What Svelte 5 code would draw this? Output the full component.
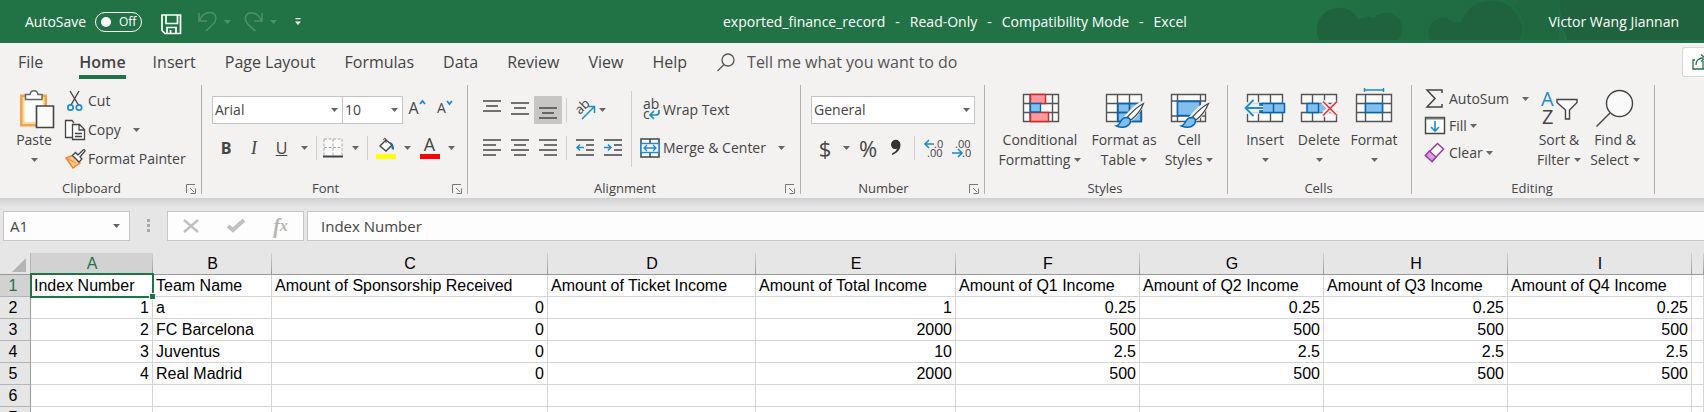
<script>
  const tabs = ['File', 'Home', 'Insert', 'Page Layout', 'Formulas', 'Data', 'Review', 'View', 'Help'];
  const title = ['exported_finance_record', '-', 'Read-Only', '-', 'Compatibility Mode', '-', 'Excel'];
  const columns = ['A', 'B', 'C', 'D', 'E', 'F', 'G', 'H', 'I'];
  const widths = [122, 119, 276, 208, 200, 184, 184, 184, 184];
  const rows = [
    ['Index Number', 'Team Name', 'Amount of Sponsorship Received', 'Amount of Ticket Income', 'Amount of Total Income', 'Amount of Q1 Income', 'Amount of Q2 Income', 'Amount of Q3 Income', 'Amount of Q4 Income'],
    [1, 'a', 0, '', 1, 0.25, 0.25, 0.25, 0.25],
    [2, 'FC Barcelona', 0, '', 2000, 500, 500, 500, 500],
    [3, 'Juventus', 0, '', 10, 2.5, 2.5, 2.5, 2.5],
    [4, 'Real Madrid', 0, '', 2000, 500, 500, 500, 500],
    ['', '', '', '', '', '', '', '', ''],
    ['', '', '', '', '', '', '', '', '']
  ];
</script>

{#snippet caret()}
  <svg class="caret" width="7" height="4" viewBox="0 0 7 4"><path d="M0 0h7L3.5 4z" fill="currentColor" /></svg>
{/snippet}

{#snippet launcher(name)}
  <button class="launcher" aria-label={name}>
    <svg width="10" height="10" viewBox="0 0 10 10" fill="none" stroke="#777"><path d="M.5 9V.5H9M4 4l4 4M9.500 4.500v5h-5" /></svg>
  </button>
{/snippet}

{#snippet lines(list)}
  <svg width="18" height="20" viewBox="0 0 18 20" stroke="#444" stroke-width="1.500">
    {#each list as [y, x1, x2]}<path d="M{x1} {y}H{x2}" />{/each}
  </svg>
{/snippet}

{#snippet brush()}
  <path d="M38.500 17c-6 3-12 9-16 14l3.500 3c5-4 10-10 12.500-17z" fill="#fff" stroke="#f3f2f1" stroke-width="4" />
  <path d="M39.500 17.500c-6 3-12 9-16 13.500l3.500 3c5-4 10-10 12.500-16.500z" fill="#fff" stroke="#444" stroke-width="1.200" />
  <path d="M12.500 40c5-1 3-8.500 10-8.500 4 .5 5 3.500 3 6.500-3 3.500-8 4-13 2z" fill="#83bfec" stroke="#0067b8" stroke-width="1.500" />
{/snippet}

<div class="app">
  <header class="title">
    <svg class="decor" width="400" height="43" viewBox="0 0 400 43" aria-hidden="true">
      <defs>
        <linearGradient id="fade"><stop offset="0" stop-color="#1e633e" stop-opacity="0" /><stop offset=".45" stop-color="#1e633e" stop-opacity=".45" /></linearGradient>
      </defs>
      <rect width="260" height="40" fill="url(#fade)" />
      <g fill="#1e633e">
        <path d="M15 40a22 22 0 1 1 40-20 14 14 0 0 1 15-2 16 16 0 0 1 24 22z" />
        <path d="M126 40c-6-15 8-27 20-20 5 2 6 4 11 2 12-30 50-26 59-2 3 8 2 14 0 20z" />
        <path d="M255 0h145v40H263q-6-20-8-40z" />
      </g>
      <path d="M216 0h39v40h-36q4-20-9-34z" fill="#1e633e" opacity=".4" />
    </svg>
    <div class="quick">
      <span>AutoSave</span>
      <button class="toggle" aria-label="AutoSave off"><i></i>Off</button>
      <button class="save" aria-label="Save">
        <svg width="21" height="21" viewBox="0 0 21 21" fill="none" stroke="#fff" stroke-width="1.700"><path d="M1 1h18.500v18.500H4l-3-3zM5 1v8.500h11.500V1M6 19.500v-6h9v6M9.500 19v-3" /></svg>
      </button>
      <button class="dim undo" aria-label="Undo">
        <svg width="20" height="22" viewBox="0 0 20 22" fill="none" stroke="currentColor" stroke-width="1.500"><path d="M1 2v8h8M1.500 9.500C5 1 15-1 17.500 5c2 5-2 8-9.500 15" /></svg>
        {@render caret()}
      </button>
      <button class="dim redo" aria-label="Redo">
        <svg width="20" height="22" viewBox="0 0 20 22" fill="none" stroke="currentColor" stroke-width="1.500"><path d="M18 2v8h-8M17.500 9.500C14 1 4-1 1.500 6c-1 5 3 8 10 14" /></svg>
        {@render caret()}
      </button>
      <button class="more" aria-label="Customize Quick Access Toolbar">
        <svg width="6" height="8" viewBox="0 0 6 8"><path d="M.5 0h5v1.300h-5zM0 3.500h6L3 7z" fill="#fff" /></svg>
      </button>
    </div>
    <div class="doc">{#each title as part}<span>{part}</span>{/each}</div>
    <div class="user">Victor Wang Jiannan</div>
  </header>

  <nav class="tabs">
    {#each tabs as tab}
      <button class:active={tab === 'Home'}><span>{tab}</span></button>
    {/each}
    <label class="tell">
      <svg width="18" height="20" viewBox="0 0 18 20" fill="none" stroke="#555" stroke-width="1.300"><circle cx="11" cy="7" r="6" /><path d="M7 11.500L.5 18" /></svg>
      <input placeholder="Tell me what you want to do" aria-label="Tell me what you want to do" />
    </label>
    <button class="share" aria-label="Share">
      <svg width="16" height="16" viewBox="0 0 16 16" fill="none" stroke="#217346" stroke-width="1.300"><path d="M3 6H1v9h14v-3M4 11c0-5 3-7 7-7M9 .5L13 4 9 7.500M11 7v8" /></svg>
    </button>
  </nav>

  <div class="ribbon">
    <section>
      <div class="body clip">
        <button class="big">
          <svg width="40" height="44" viewBox="0 0 40 44">
            <path d="M7.500 10h24v29h-24z" fill="#fdfdfd" stroke="#f5a04d" stroke-width="3" /><path d="M9.500 12h20v25h-20z" fill="none" stroke="#fbdc9b" stroke-width="2" />
            <path d="M11.500 13.500v-5h4.500c1-5 7-5 8 0h4v5z" fill="#fff" stroke="#666" stroke-width="1.500" />
            <path d="M22.500 20h17v21.500h-17z" fill="#fafafa" stroke="#444" stroke-width="1.600" />
          </svg>
          <span>Paste</span><span>{@render caret()}</span>
        </button>
        <div class="stack">
          <button>
            <svg width="22" height="22" viewBox="0 0 22 22" fill="none"><path d="M6 1l8.500 14M15 1L7 15" stroke="#444" stroke-width="1.400" /><g stroke="#1e8bcd" stroke-width="1.700"><circle cx="6.500" cy="17.500" r="2.700" /><circle cx="15" cy="17.500" r="2.700" /></g></svg>
            Cut
          </button>
          <button>
            <svg width="22" height="22" viewBox="0 0 22 22" fill="#fdfdfd" stroke="#444" stroke-width="1.300"><path d="M8 18.500H1.500v-17H8l2 2.500" /><path d="M8.500 5.500h7l5 5v10h-12zM15 5.500v5.500h5M11 14.500h7M11 17.500h7" /></svg>
            Copy <b class="gap">{@render caret()}</b>
          </button>
          <button>
            <svg width="22" height="22" viewBox="0 0 22 22"><path d="M2 10l8-3 6 8-7 5z" fill="#fbc98e" stroke="#ed8733" stroke-width="1.500" /><path d="M4 11l8 4" stroke="#ed8733" /><path d="M8.500 7.500l3-3L14 7l5-5q2-1 2 1l-5 6 2 2-3 3z" fill="#fff" stroke="#444" stroke-width="1.300" /></svg>
            Format Painter
          </button>
        </div>
      </div>
      <footer><span>Clipboard</span>{@render launcher('Clipboard settings')}</footer>
    </section>

    <section>
      <div class="body rows">
        <div class="line">
          <label class="combo family"><select aria-label="Font"><option>Arial</option></select>{@render caret()}</label>
          <label class="combo size"><select aria-label="Font size"><option>10</option></select>{@render caret()}</label>
          <button class="grow" aria-label="Increase font size"><span>A</span><svg width="7" height="5" viewBox="0 0 7 5" fill="none" stroke="#1e8bcd" stroke-width="1.800"><path d="M1 4l2.500-3L6 4" /></svg></button>
          <button class="grow small" aria-label="Decrease font size"><span>A</span><svg width="7" height="5" viewBox="0 0 7 5" fill="none" stroke="#1e8bcd" stroke-width="1.800"><path d="M1 1l2.500 3L6 1" /></svg></button>
        </div>
        <div class="line fontline">
          <button class="glyph"><b>B</b></button>
          <button class="glyph"><em>I</em></button>
          <button class="glyph"><u>U</u></button>
          <button aria-label="Underline options">{@render caret()}</button>
          <i class="rule"></i>
          <button aria-label="Borders"><svg width="20" height="20" viewBox="0 0 20 20" fill="none"><path d="M1 1h18v17H1z" fill="#fafafa" /><path d="M1 1h18M1 9.500h18M1 1v17M10 1v17M19 1v17" stroke="#aaa" stroke-dasharray="3 1.500" /><path d="M0 18.500h20" stroke="#444" stroke-width="2" /></svg></button>
          <button aria-label="Border options">{@render caret()}</button>
          <i class="rule"></i>
          <button aria-label="Fill color"><svg width="20" height="22" viewBox="0 0 20 22"><path d="M4 9l6-6 6 5-6 6z" fill="#fff" stroke="#444" stroke-width="1.400" /><path d="M10 6V2Q8 0 7.500 3" fill="none" stroke="#444" /><path d="M13 5q5 0 5 8-4-1-2-5z" fill="#1c6fb4" /><path d="M0 17h20v5H0z" fill="#ff0" /></svg></button>
          <button aria-label="Fill color options">{@render caret()}</button>
          <button class="ink" aria-label="Font color"><span>A</span></button>
          <button aria-label="Font color options">{@render caret()}</button>
        </div>
      </div>
      <footer><span>Font</span>{@render launcher('Font settings')}</footer>
    </section>

    <section>
      <div class="body align">
        <div class="rows">
          <div class="line alignline">
            <button aria-label="Top align">{@render lines([[1, 0, 18], [6, 3, 15], [11, 0, 18]])}</button>
            <button aria-label="Middle align">{@render lines([[3, 0, 18], [8, 3, 15], [14, 0, 18]])}</button>
            <button class="on" aria-label="Bottom align">{@render lines([[8, 0, 18], [13, 3, 15], [18, 0, 18]])}</button>
            <i class="rule"></i>
            <button aria-label="Orientation"><svg width="22" height="22" viewBox="0 0 22 22"><text x="0" y="0" transform="translate(6 16) rotate(-45)" font-size="13" fill="#444">ab</text><path d="M8 20L20 8M13.500 7.500H20.500V14" fill="none" stroke="#1e8bcd" stroke-width="1.500" /></svg></button>
            <button class="left" aria-label="Orientation options">{@render caret()}</button>
          </div>
          <div class="line alignline">
            <button aria-label="Align left">{@render lines([[2, 0, 18], [7, 0, 13], [12, 0, 18], [17, 0, 13]])}</button>
            <button aria-label="Center">{@render lines([[2, 0, 18], [7, 3, 15], [12, 0, 18], [17, 3, 15]])}</button>
            <button aria-label="Align right">{@render lines([[2, 0, 18], [7, 5, 18], [12, 0, 18], [17, 5, 18]])}</button>
            <i class="rule"></i>
            <button aria-label="Decrease indent"><svg width="18" height="20" viewBox="0 0 18 20" fill="none" stroke="#444" stroke-width="1.500"><path d="M0 2h18M10 7h8M10 12h8M0 17h18" /><path d="M8 9.500H1M4 6.500l-3 3 3 3" stroke="#1e8bcd" /></svg></button>
            <button aria-label="Increase indent"><svg width="18" height="20" viewBox="0 0 18 20" fill="none" stroke="#444" stroke-width="1.500"><path d="M0 2h18M10 7h8M10 12h8M0 17h18" /><path d="M0 9.500h7M4 6.500l3 3-3 3" stroke="#1e8bcd" /></svg></button>
          </div>
        </div>
        <i class="tall"></i>
        <div class="rows wide">
          <button class="line">
            <svg width="22" height="24" viewBox="0 0 22 24"><text x="4" y="11" font-size="14" fill="#444">ab</text><text x="4" y="21" font-size="14" fill="#444">c</text><path d="M20 12v2q0 3-3 3h-5M15 13l-4 4 4 4" fill="none" stroke="#1e8bcd" stroke-width="1.700" /></svg>
            Wrap Text
          </button>
          <button class="line">
            <svg width="22" height="22" viewBox="0 0 22 22" fill="none"><path d="M2 2h18v18H2zM11 2v5M11 15v5" fill="#fff" stroke="#444" stroke-width="1.500" /><path d="M2 6.500h18v9H2z" fill="#fff" stroke="#1e8bcd" stroke-width="1.500" /><path d="M5 11h12M8 8l-3 3 3 3M14 8l3 3-3 3" stroke="#1e8bcd" stroke-width="1.400" /></svg>
            Merge &amp; Center <b class="gap">{@render caret()}</b>
          </button>
        </div>
      </div>
      <footer><span>Alignment</span>{@render launcher('Alignment settings')}</footer>
    </section>

    <section>
      <div class="body rows">
        <div class="line"><label class="combo format"><select aria-label="Number format"><option>General</option></select>{@render caret()}</label></div>
        <div class="line numline">
          <button class="sign">$</button>
          <button aria-label="Currency options">{@render caret()}</button>
          <button class="sign">%</button>
          <button aria-label="Comma style"><svg width="12" height="18" viewBox="0 0 12 18"><path d="M1 5.500a4.500 4.500 0 0 1 9.500 0C10.500 11 7 14 2 16v-1.500c3-1.500 4.500-3 5-5C4 11 1 9 1 5.500z" fill="#333" /></svg></button>
          <i class="rule"></i>
          <button aria-label="Increase decimal"><svg width="22" height="22" viewBox="0 0 22 22"><text x="12" y="11" font-size="11" fill="#444">.0</text><text x="5" y="20" font-size="11" fill="#444">.00</text><path d="M12 7H3M7 3L3 7l4 4" fill="none" stroke="#1e8bcd" stroke-width="1.600" /></svg></button>
          <button aria-label="Decrease decimal"><svg width="22" height="22" viewBox="0 0 22 22"><text x="5" y="11" font-size="11" fill="#444">.00</text><text x="12" y="20" font-size="11" fill="#444">.0</text><path d="M2 16h10M8 12l4 4-4 4" fill="none" stroke="#1e8bcd" stroke-width="1.600" /></svg></button>
        </div>
      </div>
      <footer><span>Number</span>{@render launcher('Number settings')}</footer>
    </section>

    <section>
      <div class="body styles">
        <button class="big">
          <svg width="40" height="44" viewBox="0 0 40 44"><path d="M3.500 8.500h35v27h-35zM3.500 17.500h35M3.500 26.500h35M10 8.500v27M32.500 8.500v27" fill="#fafafa" stroke="#555" stroke-width="1.400" /><path d="M10.500 8.500h15v9h-15zM10.500 26.500h18v9h-18z" fill="#ff9a9a" stroke="#d8262c" stroke-width="1.500" /><path d="M10.500 17.500h10v8.500h-10z" fill="#83bfec" stroke="#0067b8" stroke-width="1.300" /></svg>
          <span>Conditional</span><span>Formatting {@render caret()}</span>
        </button>
        <button class="big">
          <svg width="40" height="44" viewBox="0 0 40 44"><path d="M2.500 8.500h35v27h-35z" fill="#fafafa" /><path d="M14 18h23v17H14z" fill="#83bfec" /><path d="M2.500 8.500h35v27h-35zM2.500 17.500h35M2.500 26.500h35M13.500 8.500v27M25.500 8.500v27" fill="none" stroke="#555" stroke-width="1.400" /><path d="M14 35.500v-18h23v18zM14 26.500h23M25.500 17.500v18" fill="none" stroke="#0067b8" stroke-width="1.400" />{@render brush()}</svg>
          <span>Format as</span><span>Table {@render caret()}</span>
        </button>
        <button class="big">
          <svg width="40" height="44" viewBox="0 0 40 44"><path d="M2.500 8.500h34v27h-34zM2.500 15h34M2.500 30h34M8.500 8.500v27M31.500 8.500v27" fill="#fafafa" stroke="#555" stroke-width="1.400" /><path d="M8.500 15.500h22.500v14H8.500z" fill="#83bfec" stroke="#0067b8" stroke-width="1.500" />{@render brush()}</svg>
          <span>Cell</span><span>Styles {@render caret()}</span>
        </button>
      </div>
      <footer><span>Styles</span></footer>
    </section>

    <section>
      <div class="body cells">
        <button class="big">
          <svg width="40" height="44" viewBox="0 0 40 44"><path d="M2.500 8.500h35v27h-35zM2.500 17.500h35M2.500 26.500h35M13.500 8.500v9M25.500 8.500v9M13.500 26.500v9M25.500 26.500v9" fill="#fafafa" stroke="#555" stroke-width="1.400" /><path d="M0 16h17v12H0z" fill="#f3f2f1" opacity=".8" /><path d="M15 17.500h24.500v9H15zM28.500 17.500v9M17 17.500v9" fill="#83bfec" stroke="#0067b8" stroke-width="1.500" /><path d="M18 22H1.500M8.500 14l-8 8 8 8" fill="none" stroke="#f3f2f1" stroke-width="4" /><path d="M18 22H1.500M8.500 14l-8 8 8 8" fill="none" stroke="#1e8bcd" stroke-width="1.800" /></svg>
          <span>Insert</span><span>{@render caret()}</span>
        </button>
        <button class="big">
          <svg width="40" height="44" viewBox="0 0 40 44"><path d="M2.500 8.500h35v9h-35zM2.500 26.500h35v9h-35zM13.500 8.500v9M25.500 8.500v9M13.500 26.500v9M25.500 26.500v9" fill="#fafafa" stroke="#555" stroke-width="1.400" /><path d="M8 17.500h14l6 4.500-6 4.500H8z" fill="#83bfec" /><path d="M20 17.500H8v9h12M19.500 17.500v9" fill="none" stroke="#0067b8" stroke-width="1.500" /><path d="M24 15.500l14 14M38 15.500l-14 14" stroke="#f3f2f1" stroke-width="5" /><path d="M24 15.500l14 14M38 15.500l-14 14" stroke="#e8373d" stroke-width="1.700" /></svg>
          <span>Delete</span><span>{@render caret()}</span>
        </button>
        <button class="big">
          <svg width="40" height="44" viewBox="0 0 40 44"><path d="M2.500 8.500h35v27h-35zM2.500 17.500h35M2.500 26.500h35M11.500 8.500v27M28.500 8.500v27" fill="#fafafa" stroke="#555" stroke-width="1.400" /><path d="M11.500 17.500h17v9h-17z" fill="#83bfec" stroke="#0067b8" stroke-width="1.500" /><path d="M10.500 4h19M10.500 2v4M29.500 2v4" fill="none" stroke="#1e8bcd" stroke-width="1.500" /></svg>
          <span>Format</span><span>{@render caret()}</span>
        </button>
      </div>
      <footer><span>Cells</span></footer>
    </section>

    <section>
      <div class="body edit">
        <div class="stack">
          <button><svg width="22" height="22" viewBox="0 0 22 22" fill="none" stroke="#444" stroke-width="1.500"><path d="M18 5V2H3l8 8.500L3 19h15v-3" /></svg>AutoSum <b class="gap">{@render caret()}</b></button>
          <button><svg width="22" height="22" viewBox="0 0 22 22" fill="none"><path d="M1.500 2.500h19v16h-19z" fill="#fff" stroke="#444" stroke-width="1.400" /><path d="M2 2.500h18v2H2z" fill="#777" /><path d="M11 6v10M7 12l4 4 4-4" stroke="#1e8bcd" stroke-width="1.600" /></svg>Fill {@render caret()}</button>
          <button><svg width="22" height="22" viewBox="0 0 22 22"><path d="M13.500 1.500l6 5.500L8 19.500 1.500 13.500z" fill="#fff" stroke="#9b3ba5" stroke-width="1.500" /><path d="M1.500 13.500l4-4.500 6.500 6-4 4.500z" fill="#d9a0e0" stroke="#9b3ba5" stroke-width="1.300" /></svg>Clear {@render caret()}</button>
        </div>
        <button class="big">
          <svg width="40" height="44" viewBox="0 0 40 44"><text x="2" y="20" font-size="20" fill="#1e8bcd">A</text><text x="3" y="38" font-size="20" fill="#444">Z</text><path d="M18 13.500h20v3L30.500 24v9h-4v-9L18 16.500z" fill="#fafafa" stroke="#444" stroke-width="1.400" /></svg>
          <span>Sort &amp;</span><span>Filter {@render caret()}</span>
        </button>
        <button class="big">
          <svg width="40" height="44" viewBox="0 0 40 44"><circle cx="24.500" cy="17.500" r="13" fill="#fafafa" stroke="#444" stroke-width="1.400" /><path d="M15 27L1.500 40.500" stroke="#444" stroke-width="1.500" /></svg>
          <span>Find &amp;</span><span>Select {@render caret()}</span>
        </button>
      </div>
      <footer><span>Editing</span></footer>
    </section>
  </div>

  <div class="formula">
    <label class="name"><input value="A1" aria-label="Name box" />{@render caret()}</label>
    <i class="dots"></i>
    <div class="fx">
      <button aria-label="Cancel"><svg width="16" height="14" viewBox="0 0 16 14" stroke="#c0c0c0" stroke-width="2.400"><path d="M1 1l14 12M15 1L1 13" /></svg></button>
      <button aria-label="Enter"><svg width="18" height="14" viewBox="0 0 18 14" fill="none" stroke="#c0c0c0" stroke-width="4"><path d="M1 7l5 4L17 1" /></svg></button>
      <button class="fn" aria-label="Insert function">f<sub>x</sub></button>
    </div>
    <input class="value" value="Index Number" aria-label="Formula bar" />
  </div>

  <table>
    <colgroup>
      <col style="width:31px" />
      {#each widths as w}<col style="width:{w}px" />{/each}
      <col />
    </colgroup>
    <thead>
      <tr>
        <th class="corner"><svg width="14" height="14" viewBox="0 0 14 14"><path d="M14 0v14H0z" fill="#b4b4b4" /></svg></th>
        {#each columns as c}<th class:sel={c === 'A'}>{c}</th>{/each}
        <th></th>
      </tr>
    </thead>
    <tbody>
      {#each rows as row, r}
        <tr>
          <th class:sel={r === 0}>{r + 1}</th>
          {#each row as cell, c}
            <td class:num={typeof cell === 'number'} class:cursor={r === 0 && c === 0}>{cell}</td>
          {/each}
          <td></td>
        </tr>
      {/each}
    </tbody>
  </table>
</div>

<style>
  :global(body) { overflow: hidden; background: #fff; }
  .app { min-height: 100vh; background: #e6e6e6; color: #444; font: 14px/20px "Open Sans", "Noto Sans", sans-serif; }
  .app * { box-sizing: border-box; }
  svg { display: block; flex: none; overflow: visible; }
  button, input, select { font: inherit; color: inherit; background: none; border: 0; margin: 0; padding: 0; border-radius: 0; outline: none; }
  button { display: flex; align-items: center; justify-content: center; white-space: nowrap; }
  i { display: block; }
  b { font-weight: 700; }
  .caret { color: #666; }

  .title { position: relative; display: grid; grid-template-columns: 723px 1fr auto; align-items: center; height: 43px; background: #217346; color: #fff; overflow: hidden; }
  .decor { position: absolute; right: 0; top: 0; width: 400px; }
  .quick { display: flex; align-items: center; padding-left: 25px; height: 40px; }
  .quick > span { width: 70px; }
  .toggle { width: 47px; height: 20px; border: 1px solid #fff; border-radius: 10px; font-size: 12px; justify-content: flex-start; gap: 8px; padding-left: 5px; }
  .toggle i { width: 10px; height: 10px; border-radius: 50%; background: #fff; }
  .save { margin-left: 19px; padding-top: 6px; }
  .dim { color: #4e9069; gap: 6px; }
  .dim .caret { color: #4e9069; }
  .undo { margin-left: 16px; }
  .redo { margin-left: 13px; }
  .more { margin-left: 18px; }
  .doc { display: flex; gap: 10px; line-height: 40px; white-space: nowrap; }
  .user { position: relative; padding-right: 25px; }

  .tabs { display: flex; height: 39px; padding-left: 4px; background: #f3f2f1; font-size: 16px; }
  .tabs button { padding: 0 14px 0 15px; align-items: stretch; }
  .tabs button:first-child { padding-left: 14px; }
  .tabs button span { height: 36px; line-height: 38px; }
  .tabs .active { font-weight: 600; padding: 0 12px 0 22px; }
  .tabs .active span { border-bottom: 4px solid #217346; }
  .tell { display: flex; align-items: center; gap: 12px; flex: 1; padding-left: 16px; }
  .tell input { width: 320px; height: 36px; padding-bottom: 2px; }
  .tell input::placeholder { color: #555; opacity: 1; }
  .tabs .share { width: 22px; height: 30px; margin-top: 4px; padding: 0 0 0 9px; background: #fff; border: 1px solid #d8d6d4; border-right: 0; border-radius: 3px 0 0 3px; align-items: center; justify-content: flex-start; overflow: hidden; }

  .ribbon { display: grid; grid-template-columns: 202px 266px 333px 184px 243px 184px 243px 1fr; height: 116px; padding-top: 3px; background: #f3f2f1; }
  section { height: 109px; border-right: 1px solid #b3b0ad; }
  .body { height: 95px; display: flex; align-items: flex-start; }
  footer { display: flex; height: 14px; line-height: 16px; font-size: 13px; padding-right: 2px; }
  footer span { flex: 1; text-align: center; }
  .launcher { width: 16px; height: 18px; }

  .big { flex-direction: column; padding-top: 1px; }
  .big span { display: flex; align-items: center; justify-content: center; gap: 4px; height: 20px; }
  .clip { padding-left: 12px; }
  .clip .big { width: 44px; }
  .stack button { height: 27px; gap: 2px; }
  .clip .stack { padding: 1px 0 0 8px; }
  .clip .stack button { height: 29px; }
  .gap { padding-left: 10px; }

  .rows { display: flex; flex-direction: column; gap: 10px; padding: 11px 0 0 10px; }
  .line { display: flex; height: 28px; align-items: stretch; justify-content: flex-start; }
  .rule { width: 1px; height: 24px; margin: auto; background: #d0cecc; }
  .combo { display: grid; border: 1px solid #c6c4c2; background: #fff; align-items: center; }
  .combo > :global(*) { grid-area: 1 / 1; }
  .combo select { appearance: none; width: 100%; height: 26px; padding: 0 2px; }
  .combo .caret { justify-self: end; margin-right: 4px; pointer-events: none; }
  .family { width: 131px; }
  .size { width: 60px; border-left: 0; }
  .format { width: 164px; }
  .grow { width: 28px; align-items: flex-start; padding: 0; }
  .grow span { font-size: 16px; line-height: 24px; }
  .grow svg { margin-top: 4px; }
  .grow.small span { font-size: 14px; }
  .fontline { display: grid; grid-template-columns: 28px 28px 27px 18px 6px 28px 16px 8px 29px 15px 29px 14px; }
  .glyph { font-size: 16px; }
  .glyph em { font-family: "Liberation Serif", serif; font-size: 18px; }
  .ink { align-items: flex-start; }
  .ink span { width: 20px; height: 25px; border-bottom: 5px solid #f00; font-size: 18px; line-height: 20px; }
  .align .rows { width: 163px; }
  .alignline { display: grid; grid-template-columns: 28px 28px 28px 9px 28px 28px; }
  .on { background: #c8c6c4; }
  .left { justify-content: flex-start; }
  .tall { width: 1px; height: 76px; margin-top: 6px; background: #d0cecc; }
  .align .wide { width: 168px; padding-left: 7px; }
  .wide .line { align-items: center; gap: 2px; }
  .numline { display: grid; grid-template-columns: 28px 14px 30px 26px 10px 28px 28px; }
  .sign { font-size: 22px; }
  .styles { display: grid; grid-template-columns: 92px 76px 54px; padding-left: 9px; }
  .cells { display: grid; grid-template-columns: 52px 56px 54px; padding-left: 11px; }
  .edit { display: grid; grid-template-columns: 107px 56px 56px; padding-left: 12px; }
  .edit .stack button { gap: 3px; }

  .formula { display: flex; height: 55px; padding: 13px 0 12px 3px; font-size: 15px; background: linear-gradient(#cfcfcf, #e6e6e6 9px); }
  .name { display: flex; align-items: center; width: 127px; padding: 0 9px 0 6px; background: #fdfdfd; border: 1px solid #c6c6c6; }
  .name input { flex: 1; min-width: 0; }
  .dots { width: 3px; height: 13px; margin: 8px 17px 0; background: repeating-linear-gradient(#a8a8a8 0 3px, transparent 3px 5px); }
  .fx { display: grid; grid-template-columns: 1fr 1fr 1fr; width: 137px; background: #fdfdfd; border: 1px solid #c6c6c6; }
  .fn { color: #b4b4b4; font: italic bold 20px/20px "Liberation Serif", serif; }
  .fn sub { font-size: 16px; line-height: 16px; }
  .value { flex: 1; min-width: 0; margin-left: 3px; padding-left: 13px; background: #fdfdfd; border: 1px solid #c6c6c6; border-right: 0; }

  table { width: 100%; table-layout: fixed; border-collapse: separate; border-spacing: 0; background: #fff; color: #000; font: 16px/20px "Liberation Sans", Arial, sans-serif; }
  th, td { height: 22px; padding: 1px 0 0; border-right: 1px solid #d4d4d4; border-bottom: 1px solid #d4d4d4; white-space: nowrap; }
  td { text-align: left; padding: 1px 3px 0; }
  .num { text-align: right; }
  th { background: #e6e6e6; font-weight: 400; }
  thead th { border-bottom-color: #999; border-right: 0; background: linear-gradient(#d0d0d0, #999) right / 1px 100% no-repeat #e6e6e6; }
  tbody th { border-right-color: #999; border-bottom-color: #b4b4b4; padding-right: 4px; }
  .corner svg { margin: 2px 4px 0 auto; }
  thead .corner { background: #e6e6e6; border-right: 1px solid #b4b4b4; }
  .sel, thead .sel { background-color: #d2d2d2; color: #217346; }
  .cursor { position: relative; }
  .cursor::before { content: ""; position: absolute; inset: -2px -2px -2px -1px; border: 2px solid #217346; }
  .cursor::after { content: ""; position: absolute; right: -3px; bottom: -3px; width: 5px; height: 5px; background: #217346; box-shadow: 0 0 0 1px #fff; }
</style>
